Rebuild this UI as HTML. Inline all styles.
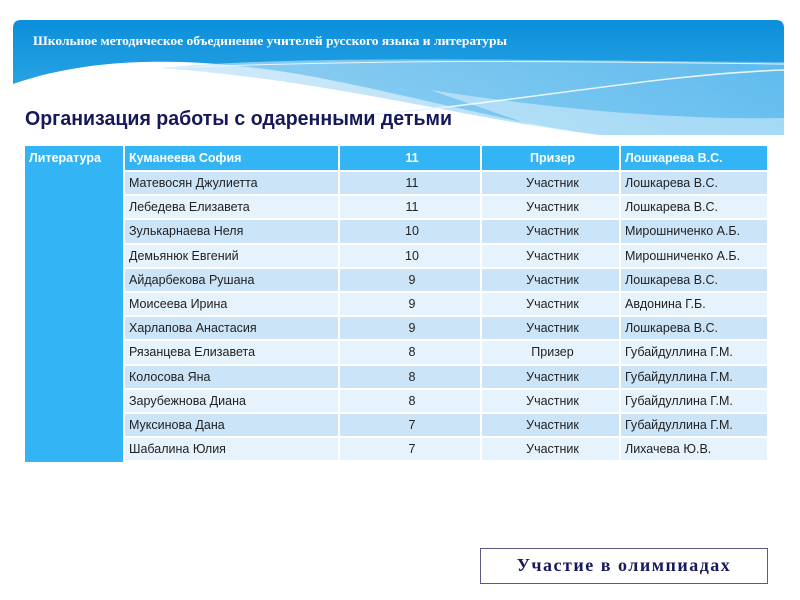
<!DOCTYPE html>
<html><head><meta charset="utf-8"><style>
body{margin:0;width:800px;height:600px;background:#fff;position:relative;overflow:hidden;font-family:"Liberation Sans",sans-serif}
.c{position:absolute;box-sizing:border-box;font-size:12.5px;color:#222;line-height:22px;white-space:nowrap}
.h{color:#fff;font-weight:bold;background:#33b4f4;line-height:25px}
</style></head><body>
<svg style="position:absolute;left:0;top:0" width="800" height="140">
<defs>
<linearGradient id="g" x1="0" y1="0" x2="0" y2="1"><stop offset="0" stop-color="#0b8fda"/><stop offset="1" stop-color="#3fb1ec"/></linearGradient>
<linearGradient id="r" x1="0" y1="0" x2="1" y2="0"><stop offset="0" stop-color="#bfe3f8"/><stop offset="1" stop-color="#7cc8f2"/></linearGradient>
</defs>
<path d="M13,28 Q13,20 21,20 L776,20 Q784,20 784,28 L784,135 L13,135 Z" fill="url(#g)"/>
<path d="M13,84 C110,50 230,60 330,80 C430,100 520,125 600,135 L13,135 Z" fill="#fff"/>
<path d="M160,68 C300,55 500,60 784,62 L784,135 L600,135 C470,120 330,80 160,68Z" fill="url(#r)" opacity="0.7"/>
<path d="M320,118 C480,110 640,75 784,70" stroke="#e6f5fd" stroke-width="1.5" fill="none"/>
<path d="M170,68 C400,58 600,62 784,64" stroke="#e6f5fd" stroke-width="1" fill="none"/>
<path d="M430,90 C560,110 680,120 784,118 L784,135 L560,135 Z" fill="#fff" opacity="0.4"/>
<text x="33" y="45" font-family="Liberation Serif,serif" font-weight="bold" font-size="12.5" fill="#fff" textLength="474" lengthAdjust="spacingAndGlyphs">Школьное методическое объединение учителей русского языка и литературы</text>
</svg>
<svg style="position:absolute;left:0;top:100px" width="500" height="30"><text x="25" y="25" font-family="Liberation Sans,sans-serif" font-weight="bold" font-size="20" fill="#17185a" textLength="427" lengthAdjust="spacingAndGlyphs">Организация работы с одаренными детьми</text></svg>
<div id="t"></div>
<div style="position:absolute;left:480px;top:548px;width:288px;height:36px;box-sizing:border-box;border:1.5px solid #5a5a8a;text-align:center;line-height:33px;font-family:'Liberation Serif',serif;font-weight:bold;font-size:18px;letter-spacing:1.5px;color:#17185a">Участие в олимпиадах</div>
<script>
var rows=[["Матевосян Джулиетта","11","Участник","Лошкарева В.С."],["Лебедева Елизавета","11","Участник","Лошкарева В.С."],["Зулькарнаева Неля","10","Участник","Мирошниченко А.Б."],["Демьянюк Евгений","10","Участник","Мирошниченко А.Б."],["Айдарбекова Рушана","9","Участник","Лошкарева В.С."],["Моисеева Ирина","9","Участник","Авдонина Г.Б."],["Харлапова Анастасия","9","Участник","Лошкарева В.С."],["Рязанцева Елизавета","8","Призер","Губайдуллина Г.М."],["Колосова Яна","8","Участник","Губайдуллина Г.М."],["Зарубежнова Диана","8","Участник","Губайдуллина Г.М."],["Муксинова Дана","7","Участник","Губайдуллина Г.М."],["Шабалина Юлия","7","Участник","Лихачева Ю.В."]];
var cols=[[125,213,'left'],[340,140,'center'],[482,137,'center'],[621,146,'left']];
var h='<div class="c h" style="left:25px;top:146px;width:98px;height:316px;padding-left:4px">Литература</div>';
var hd=["Куманеева София","11","Призер","Лошкарева В.С."];
cols.forEach(function(c,j){h+='<div class="c h" style="left:'+c[0]+'px;top:146px;width:'+c[1]+'px;height:24px;text-align:'+c[2]+';padding-left:4px">'+hd[j]+'</div>';});
rows.forEach(function(r,i){var top=172+i*24.2;var bg=i%2?'#e6f2fc':'#cce4f8';
cols.forEach(function(c,j){h+='<div class="c" style="left:'+c[0]+'px;top:'+top+'px;width:'+c[1]+'px;height:22.2px;background:'+bg+';text-align:'+c[2]+';padding-left:4px">'+r[j]+'</div>';});});
document.getElementById('t').innerHTML=h;
</script>
</body></html>
